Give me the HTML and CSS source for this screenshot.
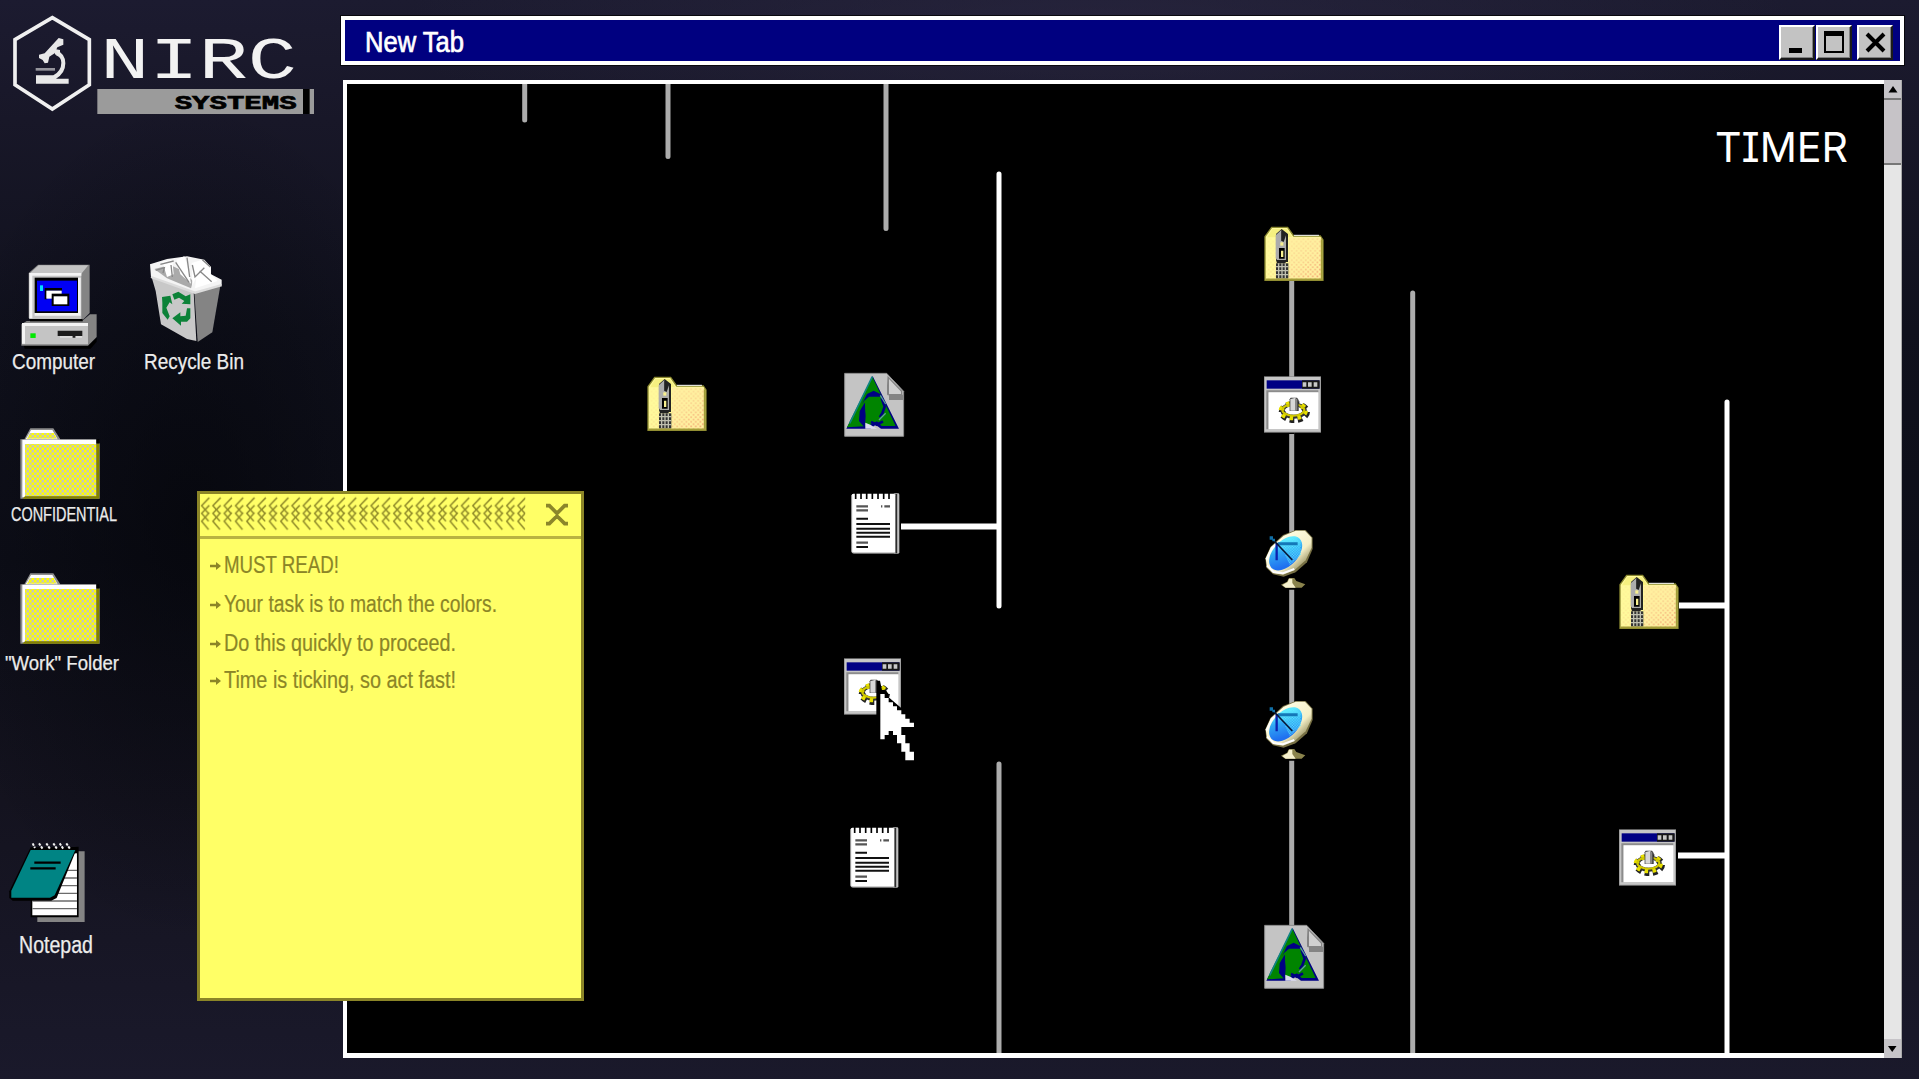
FILE: index.html
```html
<!DOCTYPE html>
<html lang="en">
<head>
<meta charset="utf-8">
<title>NIRC Systems</title>
<link rel="stylesheet" href="styles.css">
</head>
<body>
<svg class="defs" aria-hidden="true">
  <defs>
    <pattern id="dither" width="15" height="15" patternUnits="userSpaceOnUse">
      <rect width="15" height="15" fill="#c8c8b4"/>
      <rect width="7.5" height="7.5" fill="#ffff00"/><rect x="7.5" y="7.5" width="7.5" height="7.5" fill="#ffff00"/>
    </pattern>
    <pattern id="speckle" width="14" height="14" patternUnits="userSpaceOnUse">
      <rect x="1" y="1" width="5" height="5" fill="#f2a070"/><rect x="8" y="8" width="5" height="5" fill="#f2a070"/>
    </pattern>
    <pattern id="mesh" width="8" height="8" patternUnits="userSpaceOnUse">
      <rect width="4" height="4" fill="#5ff0ff"/><rect x="4" y="4" width="4" height="4" fill="#5ff0ff"/>
    </pattern>
    <linearGradient id="fade" x1="0" y1="0" x2="1" y2="1">
      <stop offset=".25" stop-color="#fff" stop-opacity=".1"/><stop offset=".6" stop-color="#fff" stop-opacity=".4"/><stop offset=".9" stop-color="#fff"/>
    </linearGradient>
    <mask id="fadeMask"><rect x="55" y="75" width="180" height="140" fill="url(#fade)"/></mask>
    <linearGradient id="dish" x1="0" y1="1" x2="1" y2="0">
      <stop offset=".2" stop-color="#2070f0"/><stop offset=".55" stop-color="#30a8f4"/><stop offset=".8" stop-color="#60e8ff"/>
    </linearGradient>
    <linearGradient id="rim" x1="0" y1="0" x2="1" y2="1">
      <stop offset=".3" stop-color="#fffce0"/><stop offset=".62" stop-color="#f4efc8"/><stop offset=".85" stop-color="#8c8554"/>
    </linearGradient>
  </defs>

  <symbol id="folder" viewBox="60 555 245 225">
    <path d="M64 598H76L94 565H163L184 598H292V610H302V776H64Z" fill="#8d8d8d"/>
    <path d="M80 598L96 570H160L176 598Z" fill="#fff"/>
    <path d="M84 596L92 579H164L174 596Z" fill="url(#dither)"/>
    <path d="M70 599H292V612H78V772H70Z" fill="#fff"/>
    <rect x="78" y="612" width="214" height="157" fill="url(#dither)"/>
    <path d="M292 598h9v13h-9z" fill="#000"/>
    <path d="M292 611H301V776H70L78 769H292Z" fill="#858200"/>
  </symbol>

  <symbol id="computer" viewBox="60 65 240 265">
    <path d="M70 312H268L290 292V304L272 325H74Z" fill="#000"/>
    <path d="M86 98L114 73H269V218L246 241H94L86 232Z" fill="#848484"/>
    <path d="M88 100L116 75H265L244 100Z" fill="#c4c4c4"/>
    <path d="M88 98H244V236H88Z" fill="#c6c6c6"/>
    <path d="M88 98H244V106H97V234H88Z" fill="#f4f4f4"/>
    <path d="M234 112H242V226H104V218H234Z" fill="#f4f4f4"/>
    <rect x="104" y="112" width="130" height="106" fill="#000"/>
    <rect x="111" y="121" width="120" height="92" fill="#0000f4"/>
    <rect x="120" y="135" width="9" height="17" fill="#00e0ff"/>
    <path d="M134 143h52v8h-52zM134 143h8v34h-8z" fill="#000"/>
    <rect x="139" y="151" width="46" height="24" fill="#fff"/>
    <rect x="155" y="160" width="53" height="37" fill="#000"/>
    <rect x="161" y="168" width="41" height="24" fill="#fff"/>
    <path d="M64 252L80 242H246L270 222H290V290L264 316H64Z" fill="#848484"/>
    <rect x="90" y="236" width="158" height="7" fill="#000"/>
    <path d="M66 248H264V312H66Z" fill="#c4c4c4"/>
    <path d="M66 248H264V257H75V310H66Z" fill="#f4f4f4"/>
    <rect x="91" y="279" width="16" height="14" fill="#00e800"/>
    <path d="M173 271H247V287H226V292H218V287H173Z" fill="#1c1c1c"/>
    <path d="M180 290H216M228 290H246" stroke="#f0f0f0" stroke-width="3"/>
  </symbol>

  <symbol id="bin" viewBox="440 40 230 275">
    <path d="M452 106L580 158L588 304L560 298L482 254L466 154Z" fill="#c8c8c8"/>
    <path d="M582 158L660 138L636 278L592 307Z" fill="#848484"/>
    <path d="M449 74L500 58L560 50L612 60L632 82V104L664 120V136L584 160L452 112Z" fill="#f4f4f4"/>
    <path d="M462 88L510 76L548 94L578 124L572 146L500 116Z" fill="#aaa"/>
    <path d="M486 66L516 60L520 104L500 112ZM528 60L552 50L566 96L572 132L540 104ZM574 70L606 60L630 80V100L598 92L576 138ZM590 96L612 84L652 124L584 146Z" fill="#fff"/>
    <path d="M466 92L492 84L488 100M512 76L516 112M526 68L566 128M560 54L568 112M576 76L584 112L612 84M606 60L630 82M480 74L520 64M598 94L634 126" stroke="#888" stroke-width="4" fill="none"/>
    <path d="M452 112L584 159L664 136" stroke="#dcdcdc" stroke-width="7" fill="none"/>
    <g fill="#0c8238">
      <path d="M485 172L510 168L516 194L508 188L498 204L508 230L502 240L486 220V190Z"/>
      <path d="M516 164L534 156L556 170L570 164V194L544 192L552 184L536 174L522 180Z"/>
      <path d="M570 206V236L560 246H542V258L516 236L540 218V230L556 228L560 206Z"/>
    </g>
  </symbol>

  <symbol id="notepad" viewBox="20 900 235 250">
    <path d="M108 934H250V1146H108Z" fill="#848484"/>
    <path d="M88 930L232 920V1132H88Z" fill="#000"/>
    <path d="M93 950L227 940V1126H93Z" fill="#fff"/>
    <path d="M93 991H227M93 1014H227M93 1037H227M93 1060H227M93 1083H227M93 1106H227" stroke="#6b6b6b" stroke-width="4"/>
    <path d="M88 922H228L166 1074L150 1082H34L24 1074V1054Z" fill="#000"/>
    <path d="M88 930H222L160 1066L146 1073H30V1052Z" fill="#008484"/>
    <path d="M99 968H178M87 985H163" stroke="#000" stroke-width="7"/>
    <path d="M94 910l7 14M113 910l12 18M135 910l12 18M156 910l12 18M175 910l12 18M195 910l12 18" stroke="#f0f0f0" stroke-width="6" stroke-dasharray="8 3"/>
  </symbol>

  <symbol id="zip" viewBox="50 45 190 175">
    <path d="M56 80L76 52H124L142 78H222L230 90V211H56Z" fill="#fffa9c" stroke="#8b8930" stroke-width="4"/>
    <path d="M62 82L78 57H122L138 82Z" fill="#f6f080"/>
    <path d="M128 82H224V206H128Z" fill="#fff0a0"/>
    <rect x="60" y="84" width="166" height="122" fill="url(#speckle)" mask="url(#fadeMask)"/>
    <path d="M226 88V208H58" stroke="#a29c38" stroke-width="5" fill="none"/>
    <path d="M143 76H218" stroke="#fff" stroke-width="3"/>
    <path d="M89 72L106 57L125 72V156H118V160H92L89 150Z" fill="#222"/>
    <path d="M88 76L105 60V92L112 96L119 76V150H92L88 144Z" fill="#acacac"/>
    <path d="M108 64V92" stroke="#222" stroke-width="5"/>
    <rect x="102" y="97" width="9" height="10" fill="#f8f090"/>
    <path d="M98 114H115V146H98Z" fill="#000"/><path d="M104 122H111V141H104Z" fill="#f8f090"/>
    <rect x="89" y="160" width="37" height="45" fill="#333"/>
    <path d="M97 160V204M107 160V204M117 160V204M89 170H126M89 182H126M89 194H126" stroke="#c0c0b0" stroke-width="4"/>
  </symbol>

  <symbol id="doc" viewBox="640 35 190 200">
    <path d="M645 42H771L822 96V231H645Z" fill="#c4c4c4" stroke="#8c8c8c" stroke-width="3"/>
    <path d="M772 44V106H820V122H778V112" fill="#848484"/>
    <path d="M776 54L816 96V106H776Z" fill="#d0d0d0" stroke="#848484" stroke-width="4"/>
    <path d="M729 50L808 208H754L738 196L722 208H650Z" fill="#000084"/>
    <path d="M728 52L798 200H756L742 186L714 200L652 204Z" fill="#008400"/>
    <path d="M728 52L660 192" stroke="#108484" stroke-width="5"/>
    <path d="M712 104L732 94L752 104L756 112L718 112L704 124L696 136Z" fill="#000084"/>
    <path d="M704 136L692 156L690 184L704 200L706 170Z" fill="#000084" stroke="#000084" stroke-width="4"/>
    <path d="M756 116L765 142L758 162L748 172M724 188L742 196L760 186" fill="none" stroke="#000084" stroke-width="8"/>
    <path d="M752 108L768 134M768 162L748 182" stroke="#5c9c9c" stroke-width="4"/>
    <ellipse cx="731" cy="147" rx="24" ry="34" fill="#008400"/>
    <path d="M707 208V190L722 196L742 208Z" fill="#dcdcf0"/>
  </symbol>

  <symbol id="notes" viewBox="660 395 155 195">
    <rect x="790" y="402" width="18" height="181" rx="4" fill="#c0c0c0"/>
    <path d="M799 404V582" stroke="#2c2c2c" stroke-width="5"/>
    <rect x="665" y="403" width="130" height="179" rx="5" fill="#fff"/>
    <path d="M665 408V576Q666 581 672 581H795" stroke="#a0a0a0" stroke-width="3" fill="none"/>
    <path d="M677 400V419M693 400V419M710 400V419M727 400V419M744 400V419M761 400V419M777 400V419" stroke="#000" stroke-width="5"/>
    <path d="M679 441H714M679 453H714M763 441H780M753 441H757M679 550H714" stroke="#555" stroke-width="7"/>
    <path d="M679 478H714M679 494H780M679 508H780M679 520H780M679 532H780M679 563H714" stroke="#111" stroke-width="6"/>
  </symbol>

  <symbol id="app" viewBox="70 495 180 180">
    <path d="M148 664h16v8h-16z" fill="#000"/>
    <rect x="73" y="499" width="171" height="169" fill="#8c8c8c"/>
    <path d="M75 501H242V665H75Z" fill="#c6c6c6"/>
    <rect x="81" y="511" width="158" height="25" fill="#000084"/>
    <path d="M187 511H240V536H187Z" fill="#161616"/>
    <path d="M189 517h11v13h-11zM205 517h11v13h-11zM222 517h11v13h-11z" fill="#c8c8c8"/>
    <path d="M80 541H236V547H86V658H80Z" fill="#8c8c8c"/>
    <rect x="87" y="547" width="149" height="110" fill="#fff"/>
    <ellipse cx="164" cy="606" rx="36" ry="22" fill="none" stroke="#222" stroke-width="22" stroke-dasharray="13 10"/>
    <ellipse cx="162" cy="602" rx="33" ry="18" fill="none" stroke="#333" stroke-width="13"/>
    <ellipse cx="161" cy="602" rx="36" ry="21" fill="none" stroke="#e8e000" stroke-width="16" stroke-dasharray="10 13"/>
    <ellipse cx="161" cy="600" rx="33" ry="17" fill="none" stroke="#d0c800" stroke-width="6"/>
    <ellipse cx="161" cy="601" rx="25" ry="12" fill="#fff"/>
    <path d="M153 563H172L177 570V603H150V568Z" fill="#333"/>
    <path d="M152 567L168 563V602H152Z" fill="#d8d8d8"/><path d="M166 566h7v36h-7z" fill="#888"/>
  </symbol>

  <symbol id="satellite" viewBox="70 55 160 190">
    <path d="M144 190h22v50h-22z" fill="#000"/>
    <path d="M77 146L92 112L130 76L168 61H198L219 84V118L202 158L168 188L132 201L100 194L80 174Z" fill="#777044"/>
    <path d="M78 146L94 112L132 78L168 63H196L216 84V114L198 152L164 182L130 195L100 190L82 172Z" fill="url(#rim)"/>
    <path d="M81 150L96 116L112 102M82 168L102 187L130 191L164 178" stroke="#fff" stroke-width="6" fill="none"/>
    <ellipse cx="138" cy="131" rx="61" ry="37" transform="rotate(-47 138 131)" fill="url(#dish)"/>
    <path d="M120 98L150 82L182 94L184 136L150 166Z" fill="url(#mesh)" opacity=".8"/>
    <path d="M114 102H174" stroke="#1478b8" stroke-width="9"/>
    <path d="M111 100V152" stroke="#0c20b0" stroke-width="7"/>
    <path d="M104 94L158 151" stroke="#081838" stroke-width="5"/>
    <path d="M90 80h10v7h6v8h-8v-5h-8z" fill="#1070a8"/>
    <path d="M148 205H164L170 214L197 224L186 234H136L124 225L142 216Z" fill="#8a834c"/>
    <path d="M148 207H158V220L168 234H138L128 226L144 217Z" fill="#f6f1ce"/>
  </symbol>

  <symbol id="pointer" viewBox="225 120 145 255">
    <path d="M229 122H240L246 150H256L266 162V172L366 257V272H328L354 340V364H314L270 290L241 324H229Z" fill="#000"/>
    <path d="M241 162H254V174H266V187H279V199H291V211H304V223H316V236H329V248H342V261H304V285H316V310H329V335H342V361H316V335H304V310H291V285H279V273H266V285H254V298H241Z" fill="#fff"/>
  </symbol>
</svg>

<main class="desktop">
  <svg class="logo" viewBox="0 0 1020 390">
    <path d="M157 53L268 119V254L157 327L45 254V119Z" fill="none" stroke="#f0f0f0" stroke-width="11"/>
    <g fill="#e8e8e8">
      <path d="M176 114L190 118V134L172 142L164 160L148 170L144 188L134 190L128 180L117 174V164L134 160Z"/>
      <path d="M160 146L180 150V162L166 164Z"/>
      <path d="M170 152Q196 160 196 190Q196 220 168 236H206V251H108V226H160Q184 212 184 188Q184 172 168 166Z"/>
      <path d="M107 204H165V212H107Z" opacity=".6"/>
    </g>
    <text class="logo-name" x="301" y="233" textLength="590" lengthAdjust="spacingAndGlyphs">NIRC</text>
    <rect x="292" y="267" width="650" height="75" fill="#9b9b9b"/>
    <path d="M909 267h20v75h-20z" fill="#000"/>
    <text class="logo-sub" x="524" y="326" textLength="366" lengthAdjust="spacingAndGlyphs">SYSTEMS</text>
  </svg>

  <div class="shortcut computer"><svg class="icon"><use href="#computer"/></svg>
    <svg class="label"><text y="22" textLength="83" lengthAdjust="spacingAndGlyphs">Computer</text></svg></div>
  <div class="shortcut recycle"><svg class="icon"><use href="#bin"/></svg>
    <svg class="label"><text y="22" textLength="100" lengthAdjust="spacingAndGlyphs">Recycle Bin</text></svg></div>
  <div class="shortcut confidential"><svg class="icon"><use href="#folder"/></svg>
    <svg class="label"><text y="22" textLength="106" lengthAdjust="spacingAndGlyphs">CONFIDENTIAL</text></svg></div>
  <div class="shortcut work"><svg class="icon"><use href="#folder"/></svg>
    <svg class="label"><text y="22" textLength="114" lengthAdjust="spacingAndGlyphs">"Work" Folder</text></svg></div>
  <div class="shortcut notepad"><svg class="icon"><use href="#notepad"/></svg>
    <svg class="label"><text y="22" textLength="74" lengthAdjust="spacingAndGlyphs">Notepad</text></svg></div>

  <section class="window">
    <header class="titlebar">
      <svg class="title"><text y="32" textLength="99" lengthAdjust="spacingAndGlyphs">New Tab</text></svg>
      <div class="controls">
        <span class="button"><svg viewBox="0 0 36 35"><path d="M10 23h13v5h-13z"/></svg></span>
        <span class="button"><svg viewBox="0 0 36 35"><path d="M8 6h20v22h-20zM10 11v15h16v-15z" fill-rule="evenodd"/></svg></span>
        <span class="button close"><svg viewBox="0 0 36 35"><path d="M10 9L27 26M27 9L10 26" stroke="#000" stroke-width="4"/></svg></span>
      </div>
    </header>
    <div class="frame">
      <div class="canvas">
        <svg class="wires" viewBox="347 84 1537 969" fill="none" stroke-width="5" stroke-linecap="round">
          <g stroke="#acacac">
            <path d="M524.7 80V120M668 80V156.500M886 80V228.500M999 764V1060M1291.700 280V925M1412.700 293V1060"/>
          </g>
          <g stroke="#fff"><path d="M999 174V606M1727 402V1060"/></g>
          <path d="M901 526.500H998M1679 605.500H1726M1678 855.500H1726" stroke="#fff" stroke-width="6" stroke-linecap="butt"/>
        </svg>
        <svg class="node zip a"><use href="#zip"/></svg>
        <svg class="node zip b"><use href="#zip"/></svg>
        <svg class="node zip c"><use href="#zip"/></svg>
        <svg class="node doc a"><use href="#doc"/></svg>
        <svg class="node doc b"><use href="#doc"/></svg>
        <svg class="node notes a"><use href="#notes"/></svg>
        <svg class="node notes b"><use href="#notes"/></svg>
        <svg class="node app a"><use href="#app"/></svg>
        <svg class="node app b"><use href="#app"/></svg>
        <svg class="node app c"><use href="#app"/></svg>
        <svg class="node satellite a"><use href="#satellite"/></svg>
        <svg class="node satellite b"><use href="#satellite"/></svg>
        <svg class="timer"><text y="31" textLength="133" lengthAdjust="spacingAndGlyphs">TIMER</text></svg>
      </div>
      <div class="scrollbar">
        <svg class="arrow" viewBox="0 0 17 18"><path d="M4.500 12.500L9 6L13.500 12.500Z"/></svg>
        <div class="thumb"></div>
        <svg class="arrow down" viewBox="0 0 17 18"><path d="M4 6.500H12.500L8.200 12.500Z"/></svg>
      </div>
    </div>
  </section>

  <aside class="note">
    <header class="note-head">
      <svg class="grip" viewBox="30 48 976 104">
        <defs><pattern id="chevrons" x="-4" width="33.900" height="160" patternUnits="userSpaceOnUse">
          <path d="M28 53L5 77L26 101M28 76L5 100L26 124M28 98L5 124L26 149" fill="none" stroke="#8f8a28" stroke-width="4.500"/>
        </pattern></defs>
        <rect x="30" y="48" width="976" height="104" fill="url(#chevrons)"/>
      </svg>
      <svg class="note-close" viewBox="0 0 66 64"><path d="M0 5H10L33 28L56 5H66M0 59H10L33 36L56 59H66M33 24V40" fill="none" stroke="#8b862a" stroke-width="11"/></svg>
    </header>
    <ul class="note-list">
      <li><svg class="bullet" viewBox="0 0 33 24"><path d="M0 8H18V0L33 12L18 24V16H0Z"/></svg><svg class="line"><text y="22" textLength="115" lengthAdjust="spacingAndGlyphs">MUST READ!</text></svg></li>
      <li><svg class="bullet" viewBox="0 0 33 24"><path d="M0 8H18V0L33 12L18 24V16H0Z"/></svg><svg class="line"><text y="22" textLength="273" lengthAdjust="spacingAndGlyphs">Your task is to match the colors.</text></svg></li>
      <li><svg class="bullet" viewBox="0 0 33 24"><path d="M0 8H18V0L33 12L18 24V16H0Z"/></svg><svg class="line"><text y="22" textLength="232" lengthAdjust="spacingAndGlyphs">Do this quickly to proceed.</text></svg></li>
      <li><svg class="bullet" viewBox="0 0 33 24"><path d="M0 8H18V0L33 12L18 24V16H0Z"/></svg><svg class="line"><text y="22" textLength="232" lengthAdjust="spacingAndGlyphs">Time is ticking, so act fast!</text></svg></li>
    </ul>
  </aside>

  <svg class="pointer"><use href="#pointer"/></svg>
</main>
</body>
</html>
```
FILE: styles.css
```css
* { box-sizing: border-box; }
body { margin: 0; background: #000; font-family: "Liberation Sans", Arial, sans-serif; overflow: hidden; }
svg { display: block; overflow: visible; }
.defs { position: absolute; width: 0; height: 0; }

.desktop {
  position: relative;
  width: 1919px;
  height: 1079px;
  overflow: hidden;
  background:
    radial-gradient(ellipse 260px 420px at 190px 520px, rgba(4, 5, 10, .7), rgba(4, 5, 10, 0)),
    radial-gradient(ellipse 700px 140px at 1100px 30px, rgba(48, 44, 72, .5), rgba(48, 44, 72, 0)),
    linear-gradient(180deg, #1c1b30 0, #181728 120px, #10111d 330px, #0d0e18 560px, #14131f 800px, #1a192b 1079px);
}

.logo { position: absolute; left: 0; top: 0; width: 340px; height: 130px; }
.logo-name { font: 400 178px "Liberation Mono", "Courier New", monospace; fill: #f2f2f2; }
.logo-sub { font: 700 58px "Liberation Mono", monospace; fill: #000; stroke: #000; stroke-width: 2; }

.shortcut { position: absolute; display: flex; flex-direction: column; }
.shortcut .label { height: 26px; width: 120px; font-size: 22.5px; fill: #ececec; stroke: #ececec; stroke-width: .25; }
.computer { left: 12px; top: 261.700px; }
.computer .icon { width: 80px; height: 88.300px; margin-left: 8px; }
.computer .label { margin-top: -3px; }
.recycle { left: 143.500px; top: 253.300px; }
.recycle .icon { width: 76.700px; height: 91.700px; margin-left: 3px; }
.recycle .label { margin-top: 2px; }
.confidential { left: 11px; top: 425px; }
.confidential .icon, .work .icon { width: 81.700px; height: 75px; }
.confidential .icon { margin-left: 8px; }
.confidential .label { margin-top: -1px; font-size: 19.500px; }
.work { left: 5px; top: 569.500px; }
.work .icon { margin-left: 14px; }
.work .label { margin-top: 3px; font-size: 21px; }
.notepad { left: 18.500px; top: 840px; }
.notepad .icon { width: 78.300px; height: 83.300px; margin-left: -11px; }
.notepad .label { margin-top: 7.500px; font-size: 23px; }

.window { position: absolute; left: 341px; top: 15.500px; width: 1563px; display: flex; flex-direction: column; gap: 15px; }
.titlebar {
  height: 49.500px;
  display: flex;
  justify-content: space-between;
  padding: 5px 7px 0 20px;
  border: 4px solid #fff;
  background: #000080;
  box-shadow: 0 0 0 1px rgba(0, 0, 0, .7);
}
.title { width: 110px; height: 36px; margin-top: -5px; font-size: 30px; fill: #fff; stroke: #fff; stroke-width: .7; }
.controls { display: flex; gap: 1px; }
.button {
  width: 36px;
  height: 35px;
  background: #c3c3c3;
  border: 2px solid;
  border-color: #fff #1a1a1a #1a1a1a #fff;
  box-shadow: inset -1px -1px 0 #808080;
}
.button svg { width: 36px; height: 35px; margin: -2px; }
.close { margin-left: 4px; }

.frame { display: flex; width: 1559px; height: 978px; margin-left: 2px; border: solid #fff; border-width: 0 0 0 4px; }
.canvas { position: relative; flex: 1; background: #000; border: solid #fff; border-width: 4px 0 5px; }
.wires { width: 1537px; height: 969px; overflow: hidden; }
.scrollbar { width: 18px; display: flex; flex-direction: column; background: #e6e6e6; border-right: 1px solid #aaa; }
.arrow { width: 17px; height: 19px; background: #c6c4c8; border-bottom: 1px solid #777; }
.thumb { height: 66px; background: #c6c3c7; border: solid #777; border-width: 1px 0 2px; }
.down { margin-top: auto; border: 0; }

/* nodes sit on a free canvas whose origin is (347, 84) on the screen */
.node { position: absolute; }
.zip { width: 63.300px; height: 58.300px; }
.zip.a { left: 299px; top: 291px; }
.zip.b { left: 915.700px; top: 140.500px; }
.zip.c { left: 1270.700px; top: 488.800px; }
.doc { width: 63.300px; height: 66.700px; }
.doc.a { left: 496.300px; top: 287.200px; }
.doc.b { left: 916px; top: 838.500px; }
.notes { width: 51.700px; height: 65px; }
.notes.a { left: 502.600px; top: 407.200px; }
.notes.b { left: 502.200px; top: 741.200px; }
.app { width: 60px; height: 60px; }
.app.a { left: 916.300px; top: 291px; }
.app.b { left: 495.700px; top: 572.500px; }
.app.c { left: 1271.300px; top: 744px; }
.satellite { width: 53.300px; height: 63.300px; }
.satellite.a { left: 916.300px; top: 444px; }
.satellite.b { left: 916.300px; top: 615px; }
.timer { position: absolute; left: 1368px; top: 47px; width: 134px; height: 40px; font: 400 41.500px Inter, sans-serif; font-feature-settings: "cv08"; fill: #fff; }

.note { position: absolute; left: 197px; top: 491px; width: 387px; height: 510px; background: #ffff66; border: 3px solid #8b8527; }
.note-head { height: 45px; display: flex; align-items: flex-start; padding-top: 2px; border-bottom: 3px solid #b9b341; }
.grip { width: 325.300px; height: 34.700px; }
.note-close { width: 22px; height: 21.300px; margin: 8px 0 0 21px; }
.note-list { list-style: none; margin: 0; padding: 12px 0 0 10px; font-size: 23px; fill: #8b8527; }
.note-list li { display: flex; height: 39px; }
.note-list li:nth-child(3) { height: 36.500px; }
.bullet { width: 11px; height: 8px; margin: 11px 3px 0 0; }
.line { width: 300px; height: 28px; stroke: #8b8527; stroke-width: .2; }

.pointer { position: absolute; left: 874.500px; top: 680px; width: 48.300px; height: 85px; }
```
